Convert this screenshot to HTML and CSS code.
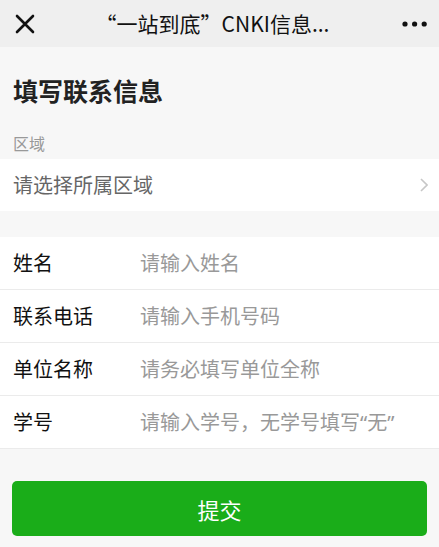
FILE: index.html
```html
<!DOCTYPE html>
<html lang="zh-CN">
<head>
    <meta charset="UTF-8">
    <meta name="viewport" content="width=device-width, initial-scale=1.0">
    <title>填写联系信息</title>
    <link rel="stylesheet" href="styles.css">
</head>
<body>
    <div class="topbar">
        <span class="close">
            <svg width="20" height="20" viewBox="0 0 20 20">
                <path d="M2 2 L18 18 M18 2 L2 18" stroke="#111" stroke-width="2.6" stroke-linecap="round"/>
            </svg>
        </span>
        <div class="topbar-title">“一站到底”CNKI信息...</div>
        <span class="more">
            <svg width="26" height="6" viewBox="0 0 26 6">
                <circle cx="3" cy="3" r="2.6" fill="#111"/>
                <circle cx="12.6" cy="3" r="2.6" fill="#111"/>
                <circle cx="22.2" cy="3" r="2.6" fill="#111"/>
            </svg>
        </span>
    </div>

    <h1 class="page-title">填写联系信息</h1>

    <div class="section-label">区域</div>
    <div class="cell-group">
        <div class="cell cell-select">
            <span class="select-text">请选择所属区域</span>
            <svg class="arrow" width="8" height="14" viewBox="0 0 8 14">
                <path d="M1 1 L7 7 L1 13" fill="none" stroke="#c7c7c7" stroke-width="1.6"/>
            </svg>
        </div>
    </div>

    <div class="cell-group form">
        <div class="cell">
            <label for="name">姓名</label>
            <input type="text" id="name" placeholder="请输入姓名">
        </div>
        <div class="cell">
            <label for="phone">联系电话</label>
            <input type="text" id="phone" placeholder="请输入手机号码">
        </div>
        <div class="cell">
            <label for="company">单位名称</label>
            <input type="text" id="company" placeholder="请务必填写单位全称">
        </div>
        <div class="cell">
            <label for="studentId">学号</label>
            <input type="text" id="studentId" placeholder="请输入学号，无学号填写“无”">
        </div>
    </div>

    <div class="actions">
        <button id="submitBtn">提交</button>
    </div>
</body>
</html>
```

FILE: styles.css
```css
body {
    margin: 0;
    padding: 0;
    background-color: #f7f7f7;
    font-family: "Noto Sans CJK SC", "Noto Sans", sans-serif;
    color: #111;
}
.topbar {
    height: 47px;
    background-color: #efefef;
    display: flex;
    align-items: center;
    padding: 0 11px 0 15px;
}
.close {
    display: flex;
    width: 20px;
}
.more {
    display: flex;
    width: 26px;
    justify-content: flex-end;
}
.topbar-title {
    flex: 1;
    text-align: center;
    font-size: 21px;
    line-height: 47px;
    color: #111;
    padding-right: 12px;
}
.page-title {
    margin: 0;
    padding: 25px 13px 0;
    font-size: 25px;
    line-height: 36px;
    font-weight: bold;
    color: #222;
}
.section-label {
    padding: 24px 13px 0;
    font-size: 16px;
    line-height: 22px;
    color: #999;
    margin-bottom: 5px;
}
.cell-group {
    background: #fff;
}
.cell-group.form {
    margin-top: 26px;
    border-bottom: 1px solid #ebebeb;
}
.cell {
    display: flex;
    align-items: center;
    height: 52px;
    padding: 0 13px;
    border-top: 1px solid #ebebeb;
    font-size: 20px;
    line-height: 50px;
}
.cell-group.form .cell:first-child {
    border-top: none;
}
.cell-select {
    border-top: none;
    justify-content: space-between;
    padding-right: 11px;
}
.select-text {
    color: #666;
}
.arrow {
    display: block;
}
label {
    width: 127px;
    flex-shrink: 0;
    color: #111;
}
input {
    flex: 1;
    min-width: 0;
    border: none;
    outline: none;
    padding: 0;
    font-family: "Noto Sans", "Noto Sans CJK SC", sans-serif;
    font-size: 20px;
    color: #111;
    background: transparent;
}
input::placeholder {
    color: #999;
}
.actions {
    padding: 32px 12px 0;
}
button {
    width: 100%;
    height: 55px;
    border: none;
    border-radius: 5px;
    background-color: #1aad19;
    color: #fff;
    font-family: inherit;
    font-size: 22px;
    cursor: pointer;
}
button:hover {
    background-color: #179b16;
}
```
